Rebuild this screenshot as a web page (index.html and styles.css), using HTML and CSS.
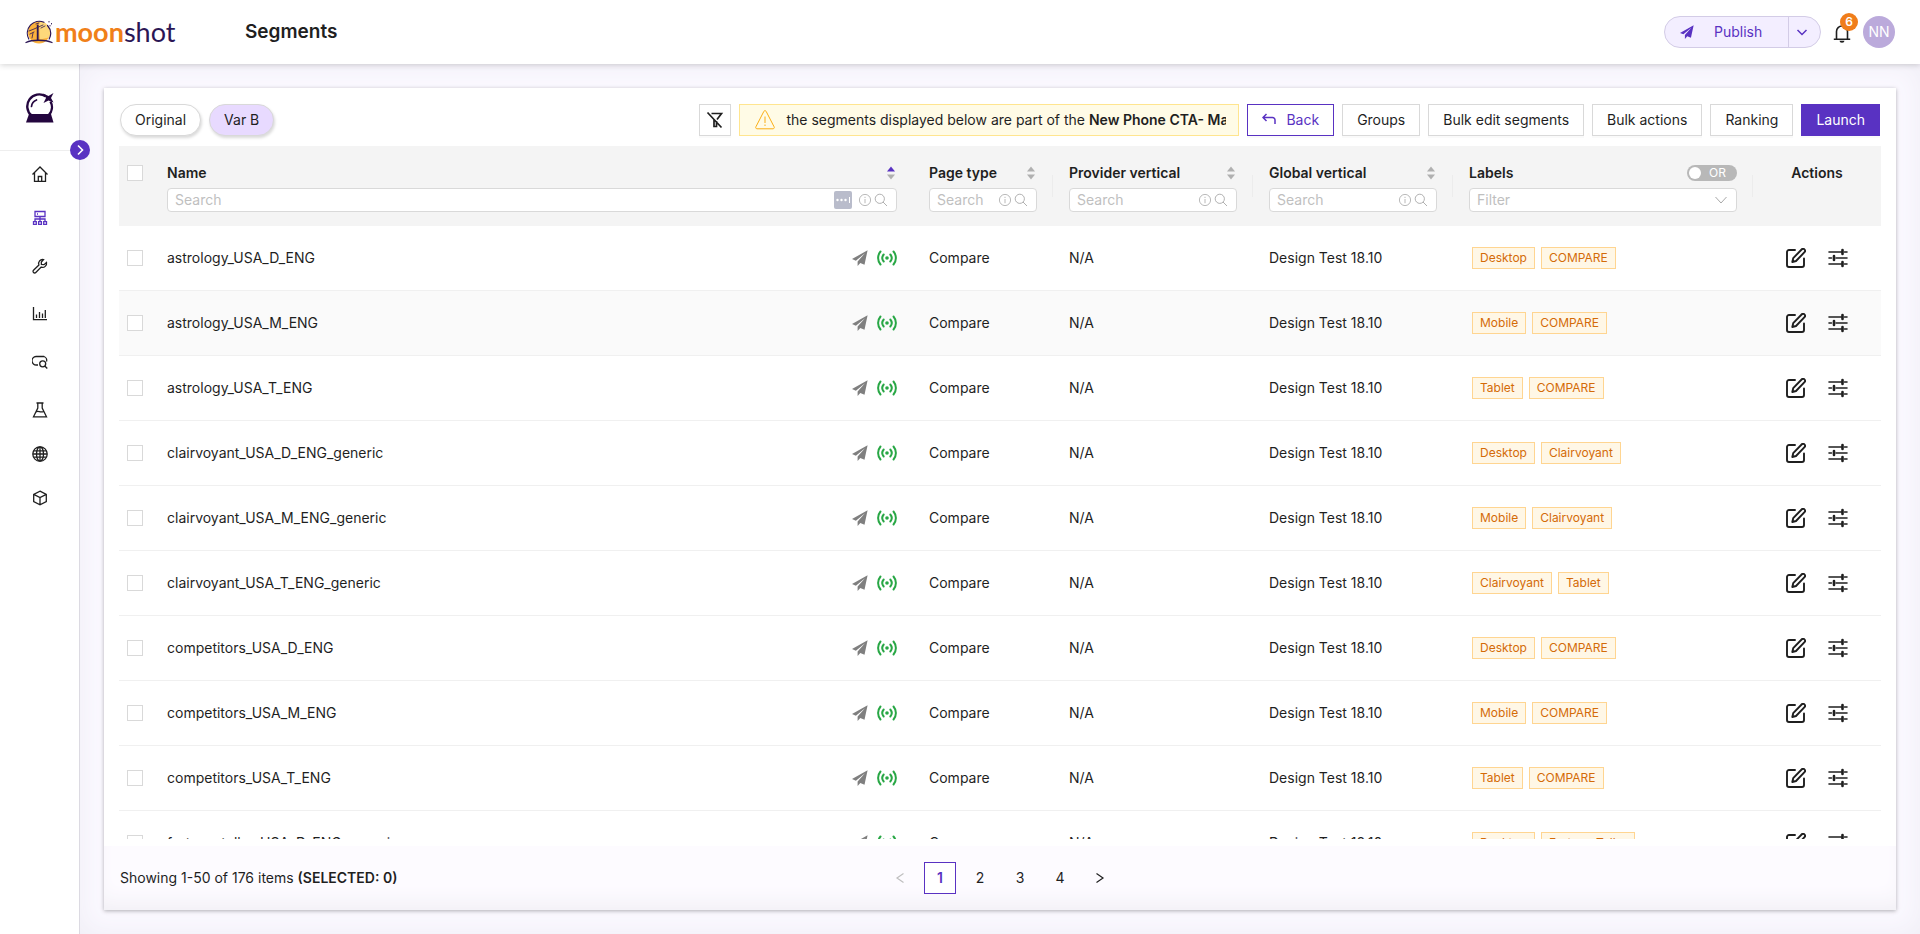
FILE: index.html
```html
<!DOCTYPE html>
<html lang="en">
<head>
    <meta charset="UTF-8">
    <meta name="viewport" content="width=device-width, initial-scale=1.0">
    <title>Segments</title>
    <link rel="stylesheet" href="styles.css">
</head>
<body>

<!-- Shared icons -->
<svg class="sprite" aria-hidden="true">
    <symbol id="plane" viewBox="0 0 16 16"><path fill="currentColor" d="M15.6.3 0 9l3.900 1.700L13 3.200 5.600 11.500V16l2.700-3.100 4.200 1.800z"/></symbol>
    <symbol id="signal" viewBox="0 0 20 16"><g fill="none" stroke="currentColor" stroke-width="2" stroke-linecap="round"><path d="M3.500 1.500C.3 5.300.3 10.700 3.500 14.500M16.500 1.500c3.200 3.800 3.200 9.200 0 13M6.700 4.500c-1.700 2-1.700 5 0 7M13.300 4.500c1.700 2 1.700 5 0 7"/></g><circle cx="10" cy="8" r="1.800" fill="currentColor"/></symbol>
    <symbol id="edit" viewBox="0 0 20 20"><g fill="none" stroke="currentColor" stroke-width="1.900" stroke-linejoin="round" stroke-linecap="round"><path d="M9 2H3a2 2 0 0 0-2 2v13a2 2 0 0 0 2 2h13a2 2 0 0 0 2-2v-6.500"/><path d="M15.600 1.500a1.900 1.900 0 0 1 2.900 2.700L10 13l-3.700 1 .9-3.800z"/></g></symbol>
    <symbol id="sliders" viewBox="0 0 20 20"><g fill="none" stroke="currentColor" stroke-width="1.600" stroke-linecap="round"><path d="M1 4h12.500M16.500 4H19M1 10h2.500M8 10h11M1 16h12.500M16.500 16H19"/><path stroke-width="2.600" d="M14.500 2v4M6 8v4M14.500 14v4"/></g></symbol>
    <symbol id="info" viewBox="0 0 14 14"><g fill="none" stroke="currentColor" stroke-width=".8"><circle cx="7" cy="7" r="5.600"/><path d="M7 6v4.200M7 3.800v1.200"/></g></symbol>
    <symbol id="search" viewBox="0 0 14 14"><g fill="none" stroke="currentColor" stroke-width=".9"><circle cx="5.800" cy="5.800" r="4.600"/><path d="m9 9 4 4"/></g></symbol>
    <symbol id="sort" viewBox="0 0 8 14"><path class="sort-up" d="M4 .5 8 5.500H0z"/><path class="sort-down" d="M4 13.500 0 8.500h8z"/></symbol>
    <symbol id="chevron" viewBox="0 0 14 14"><path fill="none" stroke="currentColor" d="m1.500 4 5.500 6 5.500-6"/></symbol>
</svg>

<header class="header">
    <a class="logo" href="#" aria-label="moonshot">
        <svg width="28" height="24" viewBox="0 0 28 24">
            <circle cx="14" cy="12.500" r="11" fill="#fbb13c"/>
            <path fill="#fdd87a" d="M14 1.500a11 11 0 0 1 10 16l-9 2z"/>
            <g fill="none" stroke="#2b1655" stroke-linecap="round">
                <path stroke-width="1.200" d="M3.800 19A12 12 0 0 1 19 2.200M22.500 5.500A12 12 0 0 1 24.200 19"/>
                <path stroke-width="1.800" d="M12.700 5.500V20"/>
                <path stroke-width=".8" d="m4 11 5-2 9-4M5 14l4-2M7 18l1-5M16 8l4-2M11 4l3-1"/>
                <path stroke-width="1.300" d="M1 22.500c6-3 19-3 26 0"/>
                <path d="M24 1.500v.5M26.500 3.500v.5M25 5.500v.5"/>
            </g>
        </svg>
        <span class="logo-text"><b>moon</b>shot</span>
    </a>
    <h1>Segments</h1>
    <div class="header-right">
        <div class="publish">
            <button class="publish-main"><svg width="14" height="14"><use href="#plane"/></svg><span>Publish</span></button>
            <button class="publish-more" aria-label="More"><svg width="12" height="12" viewBox="0 0 12 12"><path fill="none" stroke="currentColor" stroke-width="1.500" d="m1.500 4 4.500 4.500L10.500 4"/></svg></button>
        </div>
        <button class="bell" aria-label="Notifications">
            <svg width="18" height="20" viewBox="0 0 18 20"><path fill="none" stroke="#1f1f1f" stroke-width="1.600" d="M3.500 16V8.500a5.500 5.500 0 0 1 11 0V16M.8 16.200h16.400M9 3V.8"/><path fill="#1f1f1f" d="M6.500 17.800h5A2.500 2 0 0 1 6.500 17.800z"/></svg>
            <span class="badge">6</span>
        </button>
        <span class="avatar">NN</span>
    </div>
</header>

<div class="layout">
    <aside class="sidebar">
        <a class="product" href="#" aria-label="Product">
            <svg width="30" height="30" viewBox="0 0 30 30">
                <path fill="#24063f" d="M4 21h22l2.500 8.500H1z"/>
                <path fill="none" stroke="#24063f" stroke-width="2.400" d="M6.500 22.500a12 12 0 0 1 14-19.400M25.500 8.500a12 12 0 0 1-2 14"/>
                <path fill="none" stroke="#24063f" stroke-width="1.700" stroke-linecap="round" d="M6.500 13.500c.3-3 2.500-5.500 5-6.500"/>
                <path fill="#24063f" d="m18 .5 5.500 2.500 5-3-2.500 5L28.500 9.500 23.500 7.500 18.500 10l2.500-5z"/>
            </svg>
        </a>
        <button class="toggle" aria-label="Expand menu"><svg width="10" height="12" viewBox="0 0 10 12"><path fill="none" stroke="#fff" stroke-width="1.600" d="m3 1.500 4.500 4.500L3 10.500"/></svg></button>
        <nav class="menu">
            <a href="#" aria-label="Home"><svg width="16" height="16" viewBox="0 0 16 16"><path d="M.5 8.500 8 1l7.500 7.500M2.500 7v8.300h11V7M6.300 15v-4.500h3.400V15"/></svg></a>
            <a href="#" class="active" aria-label="Segments"><svg width="16" height="16" viewBox="0 0 16 16"><path d="M3 1.500h10v5H3zM5 4h1M8 6.500v5M3 11.500V9h10v2.500M1.500 11.700h2.800v2.600H1.500zM6.600 11.700h2.800v2.600H6.600zM11.700 11.700h2.800v2.600h-2.800z"/></svg></a>
            <a href="#" class="spaced" aria-label="Settings"><svg width="16" height="16" viewBox="0 0 16 16"><path d="M11.500 1.600A4 4 0 0 0 6.900 7L1.500 12.200a1.600 1.600 0 0 0 2.300 2.300L9.200 9.100a4 4 0 0 0 5.300-4.600L12 6.700 9.400 6.500 9.300 4z"/></svg></a>
            <a href="#" class="spaced" aria-label="Reports"><svg width="16" height="16" viewBox="0 0 16 16"><path d="M1.500 1v12.700H15M4.500 12V8.500M7.500 12V6M10.500 12V7.500M13.300 12V4"/></svg></a>
            <a href="#" class="spaced" aria-label="Query"><svg width="16" height="16" viewBox="0 0 16 16"><path d="M6 11H4.500A4 4 0 0 1 4 2.500h8a4 4 0 0 1 2.500 5"/><circle cx="10.700" cy="9.800" r="3"/><path d="m12.800 12 2.500 2.500"/></svg></a>
            <a href="#" class="spaced" aria-label="Experiments"><svg width="16" height="16" viewBox="0 0 16 16"><path d="M4.500 1h7M5.800 1v5L1.500 14.800h13L10.200 6V1M4 9.800c3-1.500 4 1.500 7.800-.5"/></svg></a>
            <a href="#" aria-label="Sites"><svg width="16" height="16" viewBox="0 0 16 16"><circle cx="8" cy="8" r="7.200"/><ellipse cx="8" cy="8" rx="3.500" ry="7.200"/><path d="M8 1v14M1 8h14M2 4.800h12M2 11.200h12"/></svg></a>
            <a href="#" aria-label="Products"><svg width="16" height="16" viewBox="0 0 16 16"><path d="m8 1.200 6.300 3.200v7.200L8 14.800l-6.300-3.200V4.400zM1.700 4.400 8 7.600l6.300-3.200M8 7.600v7.200"/></svg></a>
        </nav>
    </aside>

    <main class="content">
        <section class="card">
            <div class="toolbar">
                <button class="pill">Original</button>
                <button class="pill selected">Var B</button>
                <div class="toolbar-right">
                    <button class="btn btn-icon" aria-label="Clear filters"><svg width="18" height="18" viewBox="0 0 18 18"><path fill="none" stroke="currentColor" stroke-width="1.700" d="M5.500 2.500h10L11 8.500M8 8v7.500h2.500V10M1.500 1.500l14 15"/></svg></button>
                    <div class="alert">
                        <svg width="20" height="20" viewBox="0 0 20 20"><path fill="none" stroke="#faad14" stroke-linejoin="round" d="M8.900 1.300a1.300 1.300 0 0 1 2.200 0l8 15.500a1.300 1.300 0 0 1-1.100 2H2a1.300 1.300 0 0 1-1.100-2zM10 6.500V13M10 14.500v1.500"/></svg>
                        <div class="alert-text">the segments displayed below are part of the <b>New Phone CTA- Main</b></div>
                    </div>
                    <button class="btn btn-outline"><svg width="14" height="14" viewBox="0 0 14 14"><path fill="none" stroke="currentColor" stroke-width="1.500" d="M4.500 1 1 4.500 4.500 8M1 4.500h9.500a2.500 2.500 0 0 1 2.500 2.500v4"/></svg>Back</button>
                    <button class="btn">Groups</button>
                    <button class="btn">Bulk edit segments</button>
                    <button class="btn">Bulk actions</button>
                    <button class="btn">Ranking</button>
                    <button class="btn btn-primary">Launch</button>
                </div>
            </div>

            <div class="table-wrap">
                <table>
                    <colgroup>
                        <col class="col-check"><col><col class="col-type"><col class="col-vertical"><col class="col-vertical"><col class="col-labels"><col class="col-actions">
                    </colgroup>
                    <thead>
                        <tr>
                            <th class="check"><input type="checkbox" aria-label="Select all"></th>
                            <th>
                                <div class="th-title">Name<svg class="sorter asc" width="8" height="14"><use href="#sort"/></svg></div>
                                <label class="search"><input type="text" placeholder="Search" aria-label="Search name"><svg class="autofill" width="18" height="18" viewBox="0 0 18 18"><rect width="18" height="18" rx="2" fill="#b9bccb"/><circle cx="3.500" cy="9" r="1.200" fill="#fff"/><circle cx="7.500" cy="9" r="1.200" fill="#fff"/><circle cx="11.500" cy="9" r="1.200" fill="#fff"/><path stroke="#fff" d="M15.500 6v6"/></svg><svg width="14" height="14"><use href="#info"/></svg><svg width="14" height="14"><use href="#search"/></svg></label>
                            </th>
                            <th class="split">
                                <div class="th-title">Page type<svg class="sorter" width="8" height="14"><use href="#sort"/></svg></div>
                                <label class="search"><input type="text" placeholder="Search" aria-label="Search page type"><svg width="14" height="14"><use href="#info"/></svg><svg width="14" height="14"><use href="#search"/></svg></label>
                            </th>
                            <th class="split">
                                <div class="th-title">Provider vertical<svg class="sorter" width="8" height="14"><use href="#sort"/></svg></div>
                                <label class="search"><input type="text" placeholder="Search" aria-label="Search provider vertical"><svg width="14" height="14"><use href="#info"/></svg><svg width="14" height="14"><use href="#search"/></svg></label>
                            </th>
                            <th class="split">
                                <div class="th-title">Global vertical<svg class="sorter" width="8" height="14"><use href="#sort"/></svg></div>
                                <label class="search"><input type="text" placeholder="Search" aria-label="Search global vertical"><svg width="14" height="14"><use href="#info"/></svg><svg width="14" height="14"><use href="#search"/></svg></label>
                            </th>
                            <th class="split">
                                <div class="th-title">Labels<label class="switch"><input type="checkbox" aria-label="Match mode">OR</label></div>
                                <label class="search"><select aria-label="Filter labels"><option>Filter</option></select><svg width="14" height="14"><use href="#chevron"/></svg></label>
                            </th>
                            <th class="actions-head">Actions</th>
                        </tr>
                    </thead>
                    <tbody>
                        <tr>
                            <td class="check"><input type="checkbox" aria-label="Select row"></td>
                            <td><div class="name">astrology_USA_D_ENG<svg class="sent" width="16" height="16"><use href="#plane"/></svg><svg class="live" width="20" height="16"><use href="#signal"/></svg></div></td>
                            <td>Compare</td><td>N/A</td><td>Design Test 18.10</td>
                            <td><div class="tags"><span>Desktop</span><span>COMPARE</span></div></td>
                            <td><div class="actions"><button aria-label="Edit"><svg width="20" height="20"><use href="#edit"/></svg></button><button aria-label="Settings"><svg width="20" height="20"><use href="#sliders"/></svg></button></div></td>
                        </tr>
                        <tr class="hovered">
                            <td class="check"><input type="checkbox" aria-label="Select row"></td>
                            <td><div class="name">astrology_USA_M_ENG<svg class="sent" width="16" height="16"><use href="#plane"/></svg><svg class="live" width="20" height="16"><use href="#signal"/></svg></div></td>
                            <td>Compare</td><td>N/A</td><td>Design Test 18.10</td>
                            <td><div class="tags"><span>Mobile</span><span>COMPARE</span></div></td>
                            <td><div class="actions"><button aria-label="Edit"><svg width="20" height="20"><use href="#edit"/></svg></button><button aria-label="Settings"><svg width="20" height="20"><use href="#sliders"/></svg></button></div></td>
                        </tr>
                        <tr>
                            <td class="check"><input type="checkbox" aria-label="Select row"></td>
                            <td><div class="name">astrology_USA_T_ENG<svg class="sent" width="16" height="16"><use href="#plane"/></svg><svg class="live" width="20" height="16"><use href="#signal"/></svg></div></td>
                            <td>Compare</td><td>N/A</td><td>Design Test 18.10</td>
                            <td><div class="tags"><span>Tablet</span><span>COMPARE</span></div></td>
                            <td><div class="actions"><button aria-label="Edit"><svg width="20" height="20"><use href="#edit"/></svg></button><button aria-label="Settings"><svg width="20" height="20"><use href="#sliders"/></svg></button></div></td>
                        </tr>
                        <tr>
                            <td class="check"><input type="checkbox" aria-label="Select row"></td>
                            <td><div class="name">clairvoyant_USA_D_ENG_generic<svg class="sent" width="16" height="16"><use href="#plane"/></svg><svg class="live" width="20" height="16"><use href="#signal"/></svg></div></td>
                            <td>Compare</td><td>N/A</td><td>Design Test 18.10</td>
                            <td><div class="tags"><span>Desktop</span><span>Clairvoyant</span></div></td>
                            <td><div class="actions"><button aria-label="Edit"><svg width="20" height="20"><use href="#edit"/></svg></button><button aria-label="Settings"><svg width="20" height="20"><use href="#sliders"/></svg></button></div></td>
                        </tr>
                        <tr>
                            <td class="check"><input type="checkbox" aria-label="Select row"></td>
                            <td><div class="name">clairvoyant_USA_M_ENG_generic<svg class="sent" width="16" height="16"><use href="#plane"/></svg><svg class="live" width="20" height="16"><use href="#signal"/></svg></div></td>
                            <td>Compare</td><td>N/A</td><td>Design Test 18.10</td>
                            <td><div class="tags"><span>Mobile</span><span>Clairvoyant</span></div></td>
                            <td><div class="actions"><button aria-label="Edit"><svg width="20" height="20"><use href="#edit"/></svg></button><button aria-label="Settings"><svg width="20" height="20"><use href="#sliders"/></svg></button></div></td>
                        </tr>
                        <tr>
                            <td class="check"><input type="checkbox" aria-label="Select row"></td>
                            <td><div class="name">clairvoyant_USA_T_ENG_generic<svg class="sent" width="16" height="16"><use href="#plane"/></svg><svg class="live" width="20" height="16"><use href="#signal"/></svg></div></td>
                            <td>Compare</td><td>N/A</td><td>Design Test 18.10</td>
                            <td><div class="tags"><span>Clairvoyant</span><span>Tablet</span></div></td>
                            <td><div class="actions"><button aria-label="Edit"><svg width="20" height="20"><use href="#edit"/></svg></button><button aria-label="Settings"><svg width="20" height="20"><use href="#sliders"/></svg></button></div></td>
                        </tr>
                        <tr>
                            <td class="check"><input type="checkbox" aria-label="Select row"></td>
                            <td><div class="name">competitors_USA_D_ENG<svg class="sent" width="16" height="16"><use href="#plane"/></svg><svg class="live" width="20" height="16"><use href="#signal"/></svg></div></td>
                            <td>Compare</td><td>N/A</td><td>Design Test 18.10</td>
                            <td><div class="tags"><span>Desktop</span><span>COMPARE</span></div></td>
                            <td><div class="actions"><button aria-label="Edit"><svg width="20" height="20"><use href="#edit"/></svg></button><button aria-label="Settings"><svg width="20" height="20"><use href="#sliders"/></svg></button></div></td>
                        </tr>
                        <tr>
                            <td class="check"><input type="checkbox" aria-label="Select row"></td>
                            <td><div class="name">competitors_USA_M_ENG<svg class="sent" width="16" height="16"><use href="#plane"/></svg><svg class="live" width="20" height="16"><use href="#signal"/></svg></div></td>
                            <td>Compare</td><td>N/A</td><td>Design Test 18.10</td>
                            <td><div class="tags"><span>Mobile</span><span>COMPARE</span></div></td>
                            <td><div class="actions"><button aria-label="Edit"><svg width="20" height="20"><use href="#edit"/></svg></button><button aria-label="Settings"><svg width="20" height="20"><use href="#sliders"/></svg></button></div></td>
                        </tr>
                        <tr>
                            <td class="check"><input type="checkbox" aria-label="Select row"></td>
                            <td><div class="name">competitors_USA_T_ENG<svg class="sent" width="16" height="16"><use href="#plane"/></svg><svg class="live" width="20" height="16"><use href="#signal"/></svg></div></td>
                            <td>Compare</td><td>N/A</td><td>Design Test 18.10</td>
                            <td><div class="tags"><span>Tablet</span><span>COMPARE</span></div></td>
                            <td><div class="actions"><button aria-label="Edit"><svg width="20" height="20"><use href="#edit"/></svg></button><button aria-label="Settings"><svg width="20" height="20"><use href="#sliders"/></svg></button></div></td>
                        </tr>
                        <tr>
                            <td class="check"><input type="checkbox" aria-label="Select row"></td>
                            <td><div class="name">fortune_teller_USA_D_ENG_generic<svg class="sent" width="16" height="16"><use href="#plane"/></svg><svg class="live" width="20" height="16"><use href="#signal"/></svg></div></td>
                            <td>Compare</td><td>N/A</td><td>Design Test 18.10</td>
                            <td><div class="tags"><span>Desktop</span><span>Fortune Teller</span></div></td>
                            <td><div class="actions"><button aria-label="Edit"><svg width="20" height="20"><use href="#edit"/></svg></button><button aria-label="Settings"><svg width="20" height="20"><use href="#sliders"/></svg></button></div></td>
                        </tr>
                    </tbody>
                </table>
            </div>

            <footer class="card-footer">
                <div>Showing 1-50 of 176 items <b>(SELECTED: 0)</b></div>
                <nav class="pagination">
                    <button class="disabled" aria-label="Previous"><svg width="10" height="12" viewBox="0 0 10 12"><path fill="none" stroke="currentColor" stroke-width="1.200" d="M8.500 1.500 2 6l6.500 4.500"/></svg></button>
                    <button class="current">1</button>
                    <button>2</button>
                    <button>3</button>
                    <button>4</button>
                    <button aria-label="Next"><svg width="10" height="12" viewBox="0 0 10 12"><path fill="none" stroke="currentColor" stroke-width="1.200" d="M1.500 1.500 8 6l-6.500 4.500"/></svg></button>
                </nav>
            </footer>
        </section>
    </main>
</div>

</body>
</html>
```
FILE: styles.css
```css
* {
    box-sizing: border-box;
}
body {
    margin: 0;
    height: 100vh;
    display: flex;
    flex-direction: column;
    overflow: hidden;
    font-family: Inter, "Liberation Sans", sans-serif;
    font-size: 14px;
    line-height: 22px;
    color: #1f1f1f;
    background-color: #fff;
}
button, input, select {
    font: inherit;
    color: inherit;
}
button {
    padding: 0;
    background: none;
    border: none;
    cursor: pointer;
}
svg {
    display: block;
    flex-shrink: 0;
}
b {
    font-weight: 600;
}
.sprite {
    position: absolute;
    width: 0;
    height: 0;
}

/* Header */
.header {
    height: 64px;
    flex-shrink: 0;
    display: flex;
    align-items: center;
    padding: 0 25px;
    background-color: #fff;
    box-shadow: 0 1px 6px rgba(0, 0, 0, 0.18);
    position: relative;
    z-index: 2;
}
.logo {
    width: 220px;
    display: flex;
    align-items: center;
    gap: 2px;
    text-decoration: none;
}
.logo-text {
    font-family: Lato, sans-serif;
    font-size: 27px;
    line-height: 30px;
    color: #2b1655;
}
.logo-text b {
    font-weight: 700;
    color: #f08019;
}
h1 {
    margin: 0;
    font-size: 19px;
    font-weight: 600;
}
.header-right {
    margin-left: auto;
    display: flex;
    align-items: center;
    gap: 12px;
}
.publish {
    display: flex;
    height: 32px;
    border: 1px solid #d3cce6;
    border-radius: 16px;
    background-color: #f3eeff;
    color: #5932c2;
}
.publish-main {
    width: 124px;
    padding-left: 15px;
    display: flex;
    align-items: center;
    gap: 20px;
    border-right: 1px solid #d3cce6;
}
.publish-more {
    width: 31px;
    padding-left: 7px;
}
.bell {
    position: relative;
    width: 18px;
    height: 20px;
    margin-top: 2px;
}
.badge {
    position: absolute;
    top: -10px;
    left: 7px;
    width: 18px;
    height: 18px;
    border-radius: 50%;
    background-color: #f07d1a;
    color: #fff;
    font-size: 12px;
    font-weight: 600;
    line-height: 18px;
}
.avatar {
    width: 32px;
    height: 32px;
    border-radius: 50%;
    background-color: #bbaadb;
    color: #fff;
    line-height: 32px;
    text-align: center;
}

/* Sidebar */
.layout {
    flex: 1;
    min-height: 0;
    display: flex;
}
.sidebar {
    position: relative;
    width: 80px;
    flex-shrink: 0;
    border-right: 1px solid #dcdae2;
}
.product {
    display: flex;
    justify-content: center;
    height: 87px;
    padding-top: 29px;
    border-bottom: 1px solid #eee;
}
.toggle {
    position: absolute;
    top: 76px;
    right: -11px;
    width: 20px;
    height: 20px;
    border-radius: 50%;
    background-color: #5932c2;
    display: flex;
    align-items: center;
    justify-content: center;
}
.menu {
    display: flex;
    flex-direction: column;
    padding-top: 1px;
}
.menu a {
    height: 44px;
    display: flex;
    align-items: center;
    justify-content: center;
    color: #1f1f1f;
}
.menu a.spaced {
    margin-top: 4px;
}
.menu .active {
    color: #5932c2;
}
.menu svg {
    fill: none;
    stroke: currentColor;
    stroke-width: 1.3px;
}

/* Content */
.content {
    flex: 1;
    min-width: 0;
    padding: 24px;
    background-color: #fbf9ff;
    box-shadow: inset 0 0 30px #efedf5;
}
.card {
    height: 100%;
    display: flex;
    flex-direction: column;
    background-color: #fff;
    box-shadow: 0 1px 4px rgba(0, 0, 0, 0.3);
}
.toolbar {
    display: flex;
    gap: 8px;
    padding: 16px 16px 10px;
}
.toolbar-right {
    margin-left: auto;
    display: flex;
    gap: 8px;
}
.pill {
    height: 32px;
    padding: 0 14px;
    border: 1px solid #d9d9d9;
    border-radius: 16px;
    background-color: #fff;
    box-shadow: 1px 2px 3px rgba(0, 0, 0, 0.15);
}
.pill.selected {
    background-color: #e8daff;
}
.btn {
    height: 32px;
    padding: 0 14px;
    display: flex;
    align-items: center;
    gap: 10px;
    border: 1px solid #d9d9d9;
    background-color: #fff;
    box-shadow: 0 2px 0 rgba(0, 0, 0, 0.02);
}
.btn-icon {
    padding: 0 6px;
}
.btn-outline {
    border-color: #5932c2;
    color: #5932c2;
}
.btn-primary {
    border-color: #5932c2;
    background-color: #5932c2;
    color: #fff;
}
.alert {
    width: 500px;
    height: 32px;
    padding: 0 12px 0 15px;
    display: flex;
    align-items: center;
    gap: 11px;
    border: 1px solid #ffe58f;
    background-color: #fffbe6;
}
.alert-text {
    flex: 1;
    overflow: hidden;
    white-space: nowrap;
}

/* Table */
.table-wrap {
    flex: 1;
    min-height: 0;
    margin: 0 15px 7px;
    overflow: hidden;
}
table {
    width: 100%;
    table-layout: fixed;
    border-collapse: separate;
    border-spacing: 0;
}
.col-check {
    width: 32px;
}
.col-type {
    width: 140px;
}
.col-vertical {
    width: 200px;
}
.col-labels {
    width: 300px;
}
.col-actions {
    width: 128px;
}
th {
    height: 80px;
    padding: 16px 16px 0;
    vertical-align: top;
    text-align: left;
    font-weight: 600;
    background-color: #f4f4f4;
}
.split {
    background-image: linear-gradient(#ececec, #ececec);
    background-size: 1px 22px;
    background-position: right center;
    background-repeat: no-repeat;
}
td {
    height: 65px;
    padding: 0 16px;
    border-bottom: 1px solid #f0f0f0;
}
.hovered td {
    background-color: #fafafa;
}
th.check, td.check {
    padding-left: 8px;
    padding-right: 8px;
}
th.check {
    padding-top: 19px;
}
.check input {
    appearance: none;
    display: block;
    width: 16px;
    height: 16px;
    margin: 0;
    border: 1px solid #d9d9d9;
    background-color: #fff;
}
th.actions-head {
    text-align: center;
}
.th-title {
    display: flex;
    justify-content: space-between;
    align-items: center;
    margin-bottom: 4px;
}
.sorter {
    margin-right: 2px;
}
.asc {
    --up: #5932c2;
}
.sort-up {
    fill: var(--up, #b0b0b0);
}
.sort-down {
    fill: #b0b0b0;
}
.search {
    display: flex;
    align-items: center;
    gap: 2px;
    height: 24px;
    padding: 0 8px 0 7px;
    border: 1px solid #d9d9d9;
    border-radius: 4px;
    background-color: #fff;
    color: #a8a8a8;
    font-weight: 400;
}
.search input, .search select {
    flex: 1;
    min-width: 0;
    height: 22px;
    padding: 0;
    border: none;
    outline: none;
    background: none;
    appearance: none;
    color: #bfbfbf;
}
.search input::placeholder {
    color: #bfbfbf;
}
.autofill {
    margin-right: 4px;
}
.switch {
    display: flex;
    align-items: center;
    gap: 8px;
    width: 50px;
    height: 16px;
    padding-left: 2px;
    border-radius: 8px;
    background-color: #b8b8b8;
    color: #fff;
    font-size: 12px;
    font-weight: 400;
}
.switch input {
    appearance: none;
    width: 12px;
    height: 12px;
    margin: 0;
    border-radius: 50%;
    background-color: #fff;
}
.name {
    display: flex;
    align-items: center;
    gap: 9px;
}
.sent {
    margin-left: auto;
    color: #7f7f7f;
}
.live {
    color: #28a745;
}
.tags {
    display: flex;
    gap: 6px;
    padding-left: 3px;
}
.tags span {
    padding: 0 7px;
    border: 1px solid #ffd591;
    background-color: #fff7e6;
    color: #d46b08;
    font-size: 12px;
    line-height: 20px;
}
.actions {
    display: flex;
    justify-content: center;
    gap: 22px;
}

/* Footer */
.card-footer {
    height: 64px;
    flex-shrink: 0;
    display: grid;
    grid-template-columns: 1fr auto 1fr;
    align-items: center;
    padding: 0 16px;
    background-color: #fdfbff;
    box-shadow: inset 0 -16px 24px -12px #efedf3;
}
.pagination {
    display: flex;
    gap: 8px;
}
.pagination button {
    width: 32px;
    height: 32px;
    display: flex;
    align-items: center;
    justify-content: center;
}
.pagination .current {
    border: 1px solid #5932c2;
    background-color: #fff;
    color: #5932c2;
    font-weight: 600;
}
.pagination .disabled {
    color: #bfbfbf;
}
```
